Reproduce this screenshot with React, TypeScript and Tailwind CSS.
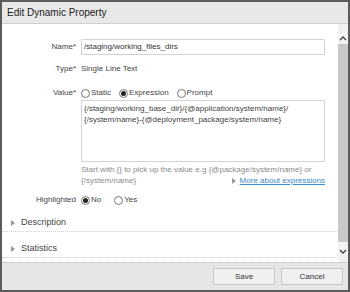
import React from "react";

function Radio({ checked }: { checked?: boolean }) {
  return (
    <span className="inline-flex h-[9px] w-[9px] items-center justify-center rounded-full border border-[#777] bg-white">
      {checked && <span className="h-[5px] w-[5px] rounded-full bg-[#222]" />}
    </span>
  );
}

function Caret() {
  return (
    <svg width="4" height="6" viewBox="0 0 4 6" className="shrink-0">
      <path d="M0 0 L4 3 L0 6 Z" fill="#999" />
    </svg>
  );
}

export default function App() {
  return (
    <div
      className="flex h-[292px] w-[350px] flex-col border-2 border-[#5b5b5b] bg-white text-[8px] text-[#333]"
      style={{ fontFamily: '"Liberation Sans", Arial, sans-serif' }}
    >
      <div className="flex h-[22px] shrink-0 items-center border-b border-[#cfcfcf] bg-[#e8e8e8] pl-[5px] text-[10px] text-[#222]">
        Edit Dynamic Property
      </div>
      <div className="flex min-h-0 flex-1">
        <div className="flex-1 pt-[15px]">
          <div className="grid grid-cols-[79px_1fr] items-center pr-[13px]">
            <div className="pr-[5px] text-right text-[#444]">Name*</div>
            <div className="flex h-[16px] items-center border border-[#d3d3d3] pl-[2px] text-[#333]">
              /staging/working_files_dirs
            </div>
          </div>
          <div className="mt-[8px] grid grid-cols-[79px_1fr] items-center pr-[13px]">
            <div className="pr-[5px] text-right text-[#444]">Type*</div>
            <div className="text-[#444]">Single Line Text</div>
          </div>
          <div className="mt-[12px] grid grid-cols-[79px_1fr] items-center pr-[13px]">
            <div className="pr-[5px] text-right text-[#444]">Value*</div>
            <div className="flex items-center text-[#444]">
              <span className="flex items-center gap-[1px]">
                <Radio />
                Static
              </span>
              <span className="ml-[8px] flex items-center gap-[1px]">
                <Radio checked />
                Expression
              </span>
              <span className="ml-[8px] flex items-center gap-[1px]">
                <Radio />
                Prompt
              </span>
            </div>
          </div>
          <div className="mt-[1px] grid grid-cols-[79px_1fr] pr-[13px]">
            <div />
            <div className="h-[62px] border border-[#d3d3d3] px-[2px] pt-[2px] leading-[11px] text-[#444]">
              {"{/staging/working_base_dir}/{@application/system/name}/"}
              <br />
              {"{/system/name}-{@deployment_package/system/name}"}
            </div>
          </div>
          <div className="mt-[2px] grid grid-cols-[79px_1fr] pr-[13px]">
            <div />
            <div className="leading-[11px] text-[#8a8a8a]">
              <div>{"Start with {} to pick up the value e.g {@package/system/name} or"}</div>
              <div className="flex justify-between">
                <span>{"{/system/name}"}</span>
                <span className="flex items-center gap-[4px]">
                  <Caret />
                  <span className="text-[#3b8dcb] underline">More about expressions</span>
                </span>
              </div>
            </div>
          </div>
          <div className="mt-[8px] grid grid-cols-[79px_1fr] items-center pr-[13px]">
            <div className="pr-[5px] text-right text-[#444]">Highlighted</div>
            <div className="flex items-center text-[#444]">
              <span className="flex items-center gap-[1px]">
                <Radio checked />
                No
              </span>
              <span className="ml-[13px] flex items-center gap-[1px]">
                <Radio />
                Yes
              </span>
            </div>
          </div>
          <div className="mt-[8px] flex h-[18px] items-center gap-[6px] border-b border-dotted border-[#d0d0d0] pl-[9px] text-[9px] text-[#444]">
            <Caret />
            Description
          </div>
          <div className="mt-[8px] flex h-[18px] items-center gap-[6px] border-b border-dotted border-[#d0d0d0] pl-[9px] text-[9px] text-[#444]">
            <Caret />
            Statistics
          </div>
        </div>
        <div className="flex w-[10px] shrink-0 flex-col items-center bg-[#f2f2f2]">
          <div className="flex h-[20px] items-end justify-center pb-[3px]">
            <svg width="8" height="5" viewBox="0 0 8 5">
              <path d="M1 4 L4 1 L7 4" stroke="#444" strokeWidth="1.4" fill="none" />
            </svg>
          </div>
          <div className="w-full flex-1 bg-[#c9c9c9]" />
          <div className="flex h-[20px] items-start justify-center pt-[7px]">
            <svg width="8" height="5" viewBox="0 0 8 5">
              <path d="M1 1 L4 4 L7 1" stroke="#444" strokeWidth="1.4" fill="none" />
            </svg>
          </div>
        </div>
      </div>
      <div className="flex h-[28px] shrink-0 items-center justify-end gap-[6px] border-t border-[#cfcfcf] bg-[#e6e6e6] pr-[5px]">
        <button className="h-[17px] w-[62px] border border-[#c8c8c8] bg-[#f0f0f0] text-[8px] text-[#333]">
          Save
        </button>
        <button className="h-[17px] w-[62px] border border-[#c8c8c8] bg-[#f0f0f0] text-[8px] text-[#333]">
          Cancel
        </button>
      </div>
    </div>
  );
}
